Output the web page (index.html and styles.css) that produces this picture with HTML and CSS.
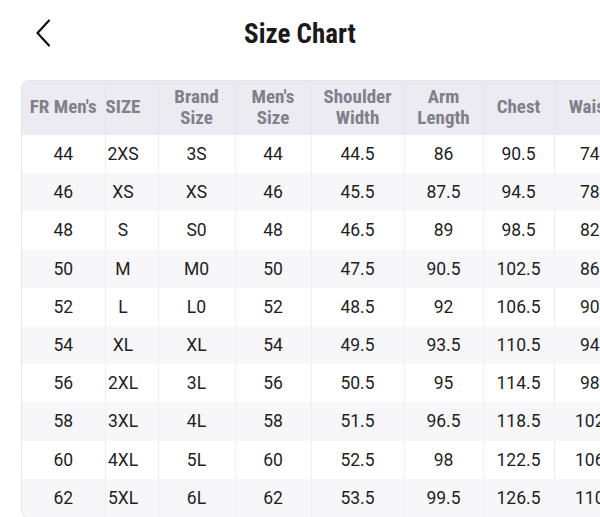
FILE: index.html
```html
<!DOCTYPE html>
<html lang="en">
<head>
<meta charset="utf-8">
<title>Size Chart</title>
<link rel="stylesheet" href="styles.css">
</head>
<body>
<header class="topbar">
  <button class="back" aria-label="Back">
    <svg width="16" height="28" viewBox="0 0 16 28"><path d="M14 1.5 L2.5 14 L14 26.5" fill="none" stroke="#111" stroke-width="2.2" stroke-linecap="round" stroke-linejoin="round"/></svg>
  </button>
  <h1 class="title"><span class="cond">Size Chart</span></h1>
</header>
<main class="chart">
  <div class="chart-frame">
    <table class="sizes">
      <colgroup>
        <col class="c1"><col class="c2"><col class="c3"><col class="c4"><col class="c5"><col class="c6"><col class="c7"><col class="c8">
      </colgroup>
      <thead>
        <tr>
          <th><span class="cond">FR Men's</span></th>
          <th class="sz"><span class="cond">SIZE</span></th>
          <th><span class="cond">Brand<br>Size</span></th>
          <th><span class="cond">Men's<br>Size</span></th>
          <th><span class="cond">Shoulder<br>Width</span></th>
          <th><span class="cond">Arm<br>Length</span></th>
          <th><span class="cond">Chest</span></th>
          <th><span class="cond">Waist</span></th>
        </tr>
      </thead>
      <tbody>
        <tr><td>44</td><td class="sz">2XS</td><td>3S</td><td>44</td><td>44.5</td><td>86</td><td>90.5</td><td>74</td></tr>
        <tr><td>46</td><td class="sz">XS</td><td>XS</td><td>46</td><td>45.5</td><td>87.5</td><td>94.5</td><td>78</td></tr>
        <tr><td>48</td><td class="sz">S</td><td>S0</td><td>48</td><td>46.5</td><td>89</td><td>98.5</td><td>82</td></tr>
        <tr><td>50</td><td class="sz">M</td><td>M0</td><td>50</td><td>47.5</td><td>90.5</td><td>102.5</td><td>86</td></tr>
        <tr><td>52</td><td class="sz">L</td><td>L0</td><td>52</td><td>48.5</td><td>92</td><td>106.5</td><td>90</td></tr>
        <tr><td>54</td><td class="sz">XL</td><td>XL</td><td>54</td><td>49.5</td><td>93.5</td><td>110.5</td><td>94</td></tr>
        <tr><td>56</td><td class="sz">2XL</td><td>3L</td><td>56</td><td>50.5</td><td>95</td><td>114.5</td><td>98</td></tr>
        <tr><td>58</td><td class="sz">3XL</td><td>4L</td><td>58</td><td>51.5</td><td>96.5</td><td>118.5</td><td>102</td></tr>
        <tr><td>60</td><td class="sz">4XL</td><td>5L</td><td>60</td><td>52.5</td><td>98</td><td>122.5</td><td>106</td></tr>
        <tr><td>62</td><td class="sz">5XL</td><td>6L</td><td>62</td><td>53.5</td><td>99.5</td><td>126.5</td><td>110</td></tr>
      </tbody>
    </table>
  </div>
</main>
</body>
</html>
```
FILE: styles.css
```css
html, body {
  margin: 0;
  padding: 0;
  overflow: hidden;
  background: #ffffff;
  width: 600px;
  height: 517px;
}
body {
  font-family: Roboto, "Noto Sans", sans-serif;
  color: #1c1c1e;
}
.topbar {
  position: relative;
  height: 80px;
  display: flex;
  align-items: flex-start;
  justify-content: center;
}
.back {
  position: absolute;
  left: 35px;
  top: 19px;
  padding: 0;
  border: 0;
  background: none;
  width: 16px;
  height: 28px;
  display: flex;
}
.title {
  margin: 0;
  margin-top: 17px;
  font-size: 27px;
  font-weight: 700;
  line-height: 34px;
  color: #1a1a1a;
}
.cond {
  display: inline-block;
  font-stretch: condensed;
}
.chart {
  padding-left: 21px;
}
.chart-frame {
  width: 603px;
  border: 1px solid #e4e4ea;
  border-right: 0;
  border-radius: 8px 0 0 8px;
  overflow: hidden;
}
.sizes {
  border-collapse: collapse;
  table-layout: fixed;
  width: 603px;
}
.c1 { width: 83px; }
.c2 { width: 53px; }
.c3 { width: 77px; }
.c4 { width: 76px; }
.c5 { width: 93px; }
.c6 { width: 79px; }
.c7 { width: 71px; }
.c8 { width: 71px; }
.sizes th {
  height: 51px;
  padding: 0 0 3px 0;
  background: #ebebf1;
  color: #80808c;
  font-size: 19px;
  font-weight: 700;
  line-height: 21px;
  text-align: center;
  white-space: nowrap;
  border-left: 1px solid #e5e5ec;
}
.sizes td {
  height: 38.2px;
  padding: 0;
  font-size: 17.5px;
  color: #1f1f1f;
  text-align: center;
  border-left: 1px solid #efeff2;
}
.sizes th:first-child, .sizes td:first-child {
  border-left: 0;
}
.sizes .sz {
  padding-right: 17px;
}
.sizes tbody tr:nth-child(even) td {
  background: #f7f7f9;
}
```
